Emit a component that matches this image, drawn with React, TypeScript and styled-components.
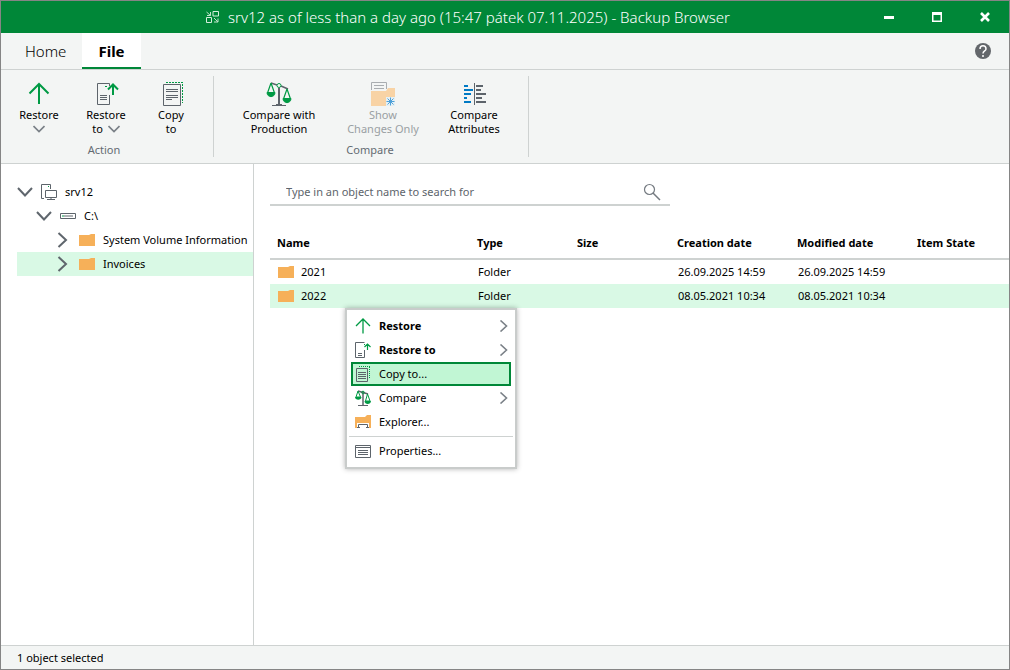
import React from "react";
import styled, { createGlobalStyle, css } from "styled-components";

const c = {
  green: "#008738",
  icon: "#009a44",
  grey: "#5d646b",
  line: "#ced2d1",
  panel: "#f3f5f4",
  select: "#d9f9e5",
  orange: "#f6b059",
};

const GlobalStyle = createGlobalStyle`
  *, *::before, *::after { box-sizing: border-box; }
  body {
    margin: 0;
    background: #fff;
    color: #000;
    font: 11px/14px "Noto Sans", "Open Sans", sans-serif;
  }
  button, input { font: inherit; color: inherit; }
  button { padding: 0; border: 0; background: none; }
  svg { display: block; flex: none; }
`;

const Window = styled.div`
  display: flex;
  flex-direction: column;
  min-height: 100vh;
  border: 1px solid #858585;
`;

const TitleBar = styled.header`
  display: grid;
  grid-template-columns: 1fr auto 1fr;
  align-items: center;
  height: 32px;
  background: ${c.green};
  color: #fff;
`;

const Title = styled.h1`
  grid-column: 2;
  display: flex;
  align-items: center;
  gap: 9px;
  margin: 0;
  padding-right: 74px;
  font: 300 15px/20px "Noto Sans", "Open Sans", sans-serif;
  white-space: nowrap;
`;

const WindowControls = styled.div`
  display: flex;
  justify-content: flex-end;
`;

const ControlButton = styled.button`
  display: grid;
  place-items: center;
  width: 48px;
  height: 32px;
`;

const TabBar = styled.nav`
  display: flex;
  align-items: stretch;
  height: 37px;
  background: ${c.panel};
  border-bottom: 1px solid ${c.line};
`;

const Tab = styled.button<{ $active?: boolean }>`
  padding: 0 16px;
  font-size: 15px;
  line-height: 20px;
  ${({ $active }) =>
    $active
      ? css`
          background: #fff;
          font-weight: 700;
          border-bottom: 2px solid ${c.green};
          padding-top: 2px;
        `
      : css`
          padding-left: 24px;
          font-weight: 300;
        `}
`;

const HelpButton = styled.button`
  margin-left: auto;
  padding: 0 18px;
`;

const Ribbon = styled.div`
  display: flex;
  height: 94px;
  padding: 6px 0;
  background: ${c.panel};
  border-bottom: 1px solid ${c.line};
`;

const RibbonGroup = styled.section<{ $pad: string }>`
  display: flex;
  flex-direction: column;
  justify-content: space-between;
  padding: ${({ $pad }) => $pad};
  border-right: 1px solid ${c.line};
`;

const RibbonButtons = styled.div`
  display: flex;
`;

const RibbonButton = styled.button<{ $width: number }>`
  display: flex;
  flex-direction: column;
  align-items: center;
  gap: 1px;
  width: ${({ $width }) => $width}px;
  padding-top: 5px;
  white-space: nowrap;
  &:disabled { color: #9aa0a3; }
`;

const ButtonText = styled.span`
  display: flex;
  flex-direction: column;
  align-items: center;
`;

const ButtonLine = styled.span`
  display: flex;
  align-items: center;
  gap: 5px;
  height: 14px;
`;

const GroupLabel = styled.h2`
  margin: 0;
  color: #646b72;
  font-size: 11px;
  font-weight: 400;
  line-height: 14px;
  text-align: center;
`;

const Body = styled.div`
  position: relative;
  display: flex;
  flex: 1;
  background: #fff;
`;

const Sidebar = styled.aside`
  flex: none;
  width: 253px;
  padding: 16px 0 0 16px;
  border-right: 1px solid ${c.line};
`;

const Tree = styled.ul`
  margin: 0;
  padding: 0;
  list-style: none;
`;

const TreeRow = styled.button<{ $level: number; $selected?: boolean }>`
  display: flex;
  align-items: center;
  gap: 8px;
  width: 100%;
  height: 24px;
  padding-left: ${({ $level }) => $level * 19}px;
  background: ${({ $selected }) => ($selected ? c.select : "transparent")};
  white-space: nowrap;
`;

const Main = styled.main`
  flex: 1;
  min-width: 0;
  padding: 14px 0 0 16px;
`;

const Search = styled.label`
  display: flex;
  align-items: center;
  width: 400px;
  max-width: 100%;
  height: 28px;
  padding: 2px 9px 0 16px;
  border-bottom: 2px solid ${c.line};
`;

const SearchInput = styled.input`
  flex: 1;
  min-width: 0;
  padding: 0;
  border: 0;
  outline: 0;
  background: transparent;
  &::placeholder { color: ${c.grey}; opacity: 1; }
`;

const FileTable = styled.table`
  width: 100%;
  margin-top: 20px;
  border-collapse: separate;
  border-spacing: 0;
  table-layout: fixed;
`;

const HeadCell = styled.th<{ $width?: number }>`
  width: ${({ $width }) => ($width ? `${$width}px` : "auto")};
  height: 34px;
  padding: 2px 0 0 7px;
  border-bottom: 2px solid ${c.line};
  font-weight: 700;
  text-align: left;
`;

const Row = styled.tr<{ $selected?: boolean }>`
  background: ${({ $selected }) => ($selected ? c.select : "transparent")};
`;

const Cell = styled.td`
  height: 24px;
  padding: 0 0 0 8px;
  white-space: nowrap;
`;

const NameCell = styled.div`
  display: flex;
  align-items: center;
  gap: 7px;
`;

const Menu = styled.div`
  position: absolute;
  top: 144px;
  left: 344px;
  width: 172px;
  padding: 4px;
  background: #fff;
  border: 2px solid #c9cccb;
  box-shadow: 0 0 5px rgba(0, 0, 0, 0.3);
`;

const MenuItem = styled.button<{ $active?: boolean; $bold?: boolean }>`
  display: flex;
  align-items: center;
  gap: 8px;
  width: 160px;
  height: 24px;
  padding: 0 0 0 2px;
  border: 2px solid ${({ $active }) => ($active ? c.green : "transparent")};
  background: ${({ $active }) => ($active ? "#c1f6d4" : "transparent")};
  font-weight: ${({ $bold }) => ($bold ? 700 : 400)};
`;

const MenuLabel = styled.span`
  flex: 1;
  text-align: left;
`;

const MenuDivider = styled.hr`
  margin: 2px -2px;
  border: 0;
  border-top: 1px solid ${c.line};
`;

const StatusBar = styled.footer`
  display: flex;
  align-items: center;
  height: 24px;
  padding-left: 16px;
  background: ${c.panel};
  border-top: 1px solid ${c.line};
`;

function Svg({ w, h = w, children }: { w: number; h?: number; children: React.ReactNode }) {
  return (
    <svg width={w} height={h} viewBox={`0 0 ${w} ${h}`} fill="none" aria-hidden="true">
      {children}
    </svg>
  );
}

const ChevronDown = () => (
  <Svg w={16} h={12}><path d="M1 2 8 9.500 15 2" stroke="#5f666d" strokeWidth="2" /></Svg>
);
const ChevronRight = () => (
  <Svg w={16}><path d="M3.500 1 11 8 3.500 15" stroke="#5f666d" strokeWidth="2" /></Svg>
);
const SmallDown = () => (
  <Svg w={12} h={8}><path d="M.5 1 6 6.500 11.500 1" stroke="#7a8087" strokeWidth="1.700" /></Svg>
);
const MenuArrow = () => (
  <Svg w={12}><path d="M3.500 .5 9.500 6 3.500 11.500" stroke="#7a8087" strokeWidth="1.600" /></Svg>
);
const Folder = () => (
  <Svg w={16} h={12}><path d="M0 1H10L12 0H16V12H0Z" fill={c.orange} /></Svg>
);

const AppIcon = () => (
  <Svg w={13} h={12}>
    <path d="M7 .5H12.500V5H7ZM.5 6.500H5.500V11.500H.5Z" stroke="#d5eedd" />
    <path d="M.5 1 4.500 4.500M4.500 1V4.500H1M8 7 12 11M12 7.500V11H8" stroke="#bfe5cb" />
  </Svg>
);

const RestoreIcon = () => (
  <Svg w={26}><path d="M13 3V23M3.500 12.500 13 3 22.500 12.500" stroke={c.icon} strokeWidth="2" /></Svg>
);

const RestoreToIcon = () => (
  <Svg w={26}>
    <path d="M16.500 14V23.500H4.500V2.500H16.500V5" stroke={c.grey} />
    <path d="M7 14.500H14M7 16.500H14M7 18.500H14" stroke={c.grey} />
    <path d="M12 5.500H14" stroke={c.icon} />
    <path d="M20 14V3.500M15 8.500 20 3.500 25 8.500" stroke={c.icon} strokeWidth="2" />
  </Svg>
);

const CopyIcon = () => (
  <Svg w={26}>
    <path d="M5.500 3.500H22.500V24.500H5.500Z" stroke={c.grey} />
    <path d="M8 8.500H20M8 10.500H20M8 14.500H20M8 16.500H20M8 18.500H14" stroke={c.grey} />
    <path d="M8 1.500H25M24.500 3V22" stroke={c.icon} strokeDasharray="2 1" />
  </Svg>
);

const ScalesIcon = () => (
  <Svg w={26}>
    <path d="M5 2 11 4M15 5 22 8" stroke={c.grey} strokeWidth="1.500" />
    <path d="M13 7V23" stroke={c.grey} strokeWidth="2" />
    <path d="M6 24.500H20M10 23.500H16" stroke={c.grey} />
    <circle cx="13" cy="4.500" r="2" stroke={c.icon} />
    <path d="M5 2 1.500 12M5 2 8.500 12M21 8 17.500 18M21 8 24.500 18" stroke={c.icon} strokeWidth="1.200" />
    <path d="M1 11.500H9C9 17 1 17 1 11.500ZM17 17.500H25C25 23 17 23 17 17.500Z" fill={c.icon} stroke={c.icon} />
  </Svg>
);

const ChangesIcon = () => (
  <Svg w={26}>
    <path d="M1 10H16L18 7H25V25H1Z" fill="#f8d3a5" />
    <path d="M1.500 9V1.500H16.500V8" stroke="#a9adb0" />
    <path d="M4 4.500H14M4 7.500H14" stroke="#a9adb0" />
    <path d="M16 16H25V25H16Z" fill="#e5f0f4" />
    <path d="M20.500 16.500V24.500M16.500 20.500H24.500M17.500 17.500 23.500 23.500M23.500 17.500 17.500 23.500" stroke="#4ea0d8" />
  </Svg>
);

const AttributesIcon = () => (
  <Svg w={26}>
    <path d="M3 5H7M3 9H12M3 13H10M3 17H6M3 21H10" stroke="#007ac4" strokeWidth="2" />
    <path d="M15 5H22M15 9H20M15 13H25M15 17H21M15 21H25" stroke={c.grey} strokeWidth="2" />
    <path d="M13.500 2V24" stroke={c.grey} />
  </Svg>
);

const ServerIcon = () => (
  <Svg w={16}>
    <path d="M3 14.500H.5V.5H9.500V5" stroke={c.grey} />
    <path d="M4.500 6.500H15.500V13.500H4.500Z" stroke={c.grey} />
    <path d="M10 14V15.500M6 15.500H14" stroke={c.grey} />
    <path d="M7 2.500H8" stroke={c.icon} />
  </Svg>
);

const DriveIcon = () => (
  <Svg w={16} h={6}>
    <path d="M.5.5H15.500V5.500H.5ZM4 3H13" stroke={c.grey} />
    <path d="M2 3H4" stroke={c.icon} />
  </Svg>
);

const SearchIcon = () => (
  <Svg w={18}>
    <circle cx="6.500" cy="6.500" r="5" stroke="#747a80" strokeWidth="1.200" />
    <path d="M10 10 17 17" stroke="#747a80" strokeWidth="1.500" />
  </Svg>
);

const HelpIcon = () => (
  <Svg w={16}>
    <circle cx="8" cy="8" r="8" fill="#63676b" />
    <path d="M5 6C5 1.800 11 1.800 11 6 11 8 8 8 8 10.500" stroke="#fff" strokeWidth="1.500" />
    <circle cx="8" cy="13" r="1" fill="#fff" />
  </Svg>
);

const MenuRestore = () => (
  <Svg w={16}><path d="M8 1V15.500M1 8 8 1 15 8" stroke={c.icon} strokeWidth="1.300" /></Svg>
);

const MenuRestoreTo = () => (
  <Svg w={16}>
    <path d="M9.500 8V15.500H.5V.5H9.500M3 11.500H7M3 13.500H7" stroke={c.grey} />
    <path d="M9 2.500H10M12.500 8V2M9.500 5 12.500 2 15.500 5" stroke={c.icon} strokeWidth="1.200" />
  </Svg>
);

const MenuCopy = () => (
  <Svg w={16}>
    <path d="M1.500 2.500H12.500V15.500H1.500ZM3 6.500H11M3 8.500H11M3 10.500H11M3 12.500H11" stroke={c.grey} />
    <path d="M4 .5H15M14.500 1V13" stroke={c.icon} strokeDasharray="1 1" />
  </Svg>
);

const MenuScales = () => (
  <Svg w={16}>
    <path d="M3 1 13 4M8 4V15" stroke={c.grey} strokeWidth="1.500" />
    <path d="M3 15.500H13" stroke={c.grey} />
    <circle cx="8" cy="2.500" r="1.300" stroke={c.icon} />
    <path d="M3 1 1 7H5.500ZM12.500 4 10.500 11H15Z" stroke={c.icon} />
    <path d="M0 7H6.500C6.500 10.500 0 10.500 0 7ZM9.500 11H16C16 15 9.500 15 9.500 11Z" fill={c.icon} />
  </Svg>
);

const ExplorerIcon = () => (
  <Svg w={16} h={14}>
    <path d="M0 2H10L12 0H16V13H0Z" fill={c.orange} />
    <path d="M2 14V8H14V14Z" fill="#fff" />
    <path d="M3.500 12.500V9.500H12.500V12.500M2 12.500H5M11 12.500H14" stroke={c.grey} />
  </Svg>
);

const PropertiesIcon = () => (
  <Svg w={16} h={13}>
    <path d="M.5.5H15.500V12.500H.5ZM1 2.500H15M3 5.500H13M3 7.500H13M3 9.500H13" stroke={c.grey} />
  </Svg>
);

type MenuEntry = {
  label: string;
  icon: React.ReactNode;
  bold?: boolean;
  sub?: boolean;
  active?: boolean;
};

const menuGroups: MenuEntry[][] = [
  [
    { label: "Restore", icon: <MenuRestore />, bold: true, sub: true },
    { label: "Restore to", icon: <MenuRestoreTo />, bold: true, sub: true },
    { label: "Copy to...", icon: <MenuCopy />, active: true },
    { label: "Compare", icon: <MenuScales />, sub: true },
    { label: "Explorer...", icon: <ExplorerIcon /> },
  ],
  [{ label: "Properties...", icon: <PropertiesIcon /> }],
];

const files = [
  { name: "2021", type: "Folder", created: "26.09.2025 14:59", modified: "26.09.2025 14:59" },
  { name: "2022", type: "Folder", created: "08.05.2021 10:34", modified: "08.05.2021 10:34", selected: true },
];

export default function App() {
  return (
    <Window>
      <GlobalStyle />
      <TitleBar>
        <Title>
          <AppIcon />
          srv12 as of less than a day ago (15:47 pátek 07.11.2025) - Backup Browser
        </Title>
        <WindowControls>
          <ControlButton aria-label="Minimize">
            <Svg w={10}><path d="M0 5.500H10" stroke="#fff" strokeWidth="3" /></Svg>
          </ControlButton>
          <ControlButton aria-label="Maximize">
            <Svg w={10}><path d="M0 0H10V10H0ZM1.500 3V8.500H8.500V3Z" fill="#fff" fillRule="evenodd" /></Svg>
          </ControlButton>
          <ControlButton aria-label="Close">
            <Svg w={10}><path d="M1 1 9 9M9 1 1 9" stroke="#fff" strokeWidth="2.600" /></Svg>
          </ControlButton>
        </WindowControls>
      </TitleBar>

      <TabBar>
        <Tab>Home</Tab>
        <Tab $active>File</Tab>
        <HelpButton aria-label="Help"><HelpIcon /></HelpButton>
      </TabBar>

      <Ribbon>
        <RibbonGroup $pad="0 11px 0 5px">
          <RibbonButtons>
            <RibbonButton $width={66}>
              <RestoreIcon />
              <ButtonText>
                <ButtonLine>Restore</ButtonLine>
                <ButtonLine><SmallDown /></ButtonLine>
              </ButtonText>
            </RibbonButton>
            <RibbonButton $width={68}>
              <RestoreToIcon />
              <ButtonText>
                <ButtonLine>Restore</ButtonLine>
                <ButtonLine>to <SmallDown /></ButtonLine>
              </ButtonText>
            </RibbonButton>
            <RibbonButton $width={62}>
              <CopyIcon />
              <ButtonText>
                <ButtonLine>Copy</ButtonLine>
                <ButtonLine>to</ButtonLine>
              </ButtonText>
            </RibbonButton>
          </RibbonButtons>
          <GroupLabel>Action</GroupLabel>
        </RibbonGroup>
        <RibbonGroup $pad="0 17px 0 15px">
          <RibbonButtons>
            <RibbonButton $width={100}>
              <ScalesIcon />
              <ButtonText>
                <ButtonLine>Compare with</ButtonLine>
                <ButtonLine>Production</ButtonLine>
              </ButtonText>
            </RibbonButton>
            <RibbonButton $width={108} disabled>
              <ChangesIcon />
              <ButtonText>
                <ButtonLine>Show</ButtonLine>
                <ButtonLine>Changes Only</ButtonLine>
              </ButtonText>
            </RibbonButton>
            <RibbonButton $width={74}>
              <AttributesIcon />
              <ButtonText>
                <ButtonLine>Compare</ButtonLine>
                <ButtonLine>Attributes</ButtonLine>
              </ButtonText>
            </RibbonButton>
          </RibbonButtons>
          <GroupLabel>Compare</GroupLabel>
        </RibbonGroup>
      </Ribbon>

      <Body>
        <Sidebar>
          <Tree>
            <li><TreeRow $level={0}><ChevronDown /><ServerIcon />srv12</TreeRow></li>
            <li><TreeRow $level={1}><ChevronDown /><DriveIcon />C:\</TreeRow></li>
            <li><TreeRow $level={2}><ChevronRight /><Folder />System Volume Information</TreeRow></li>
            <li><TreeRow $level={2} $selected><ChevronRight /><Folder />Invoices</TreeRow></li>
          </Tree>
        </Sidebar>

        <Main>
          <Search>
            <SearchInput aria-label="Search" placeholder="Type in an object name to search for" />
            <SearchIcon />
          </Search>
          <FileTable>
            <thead>
              <tr>
                <HeadCell $width={200}>Name</HeadCell>
                <HeadCell $width={100}>Type</HeadCell>
                <HeadCell $width={100}>Size</HeadCell>
                <HeadCell $width={120}>Creation date</HeadCell>
                <HeadCell $width={120}>Modified date</HeadCell>
                <HeadCell>Item State</HeadCell>
              </tr>
            </thead>
            <tbody>
              {files.map((f) => (
                <Row key={f.name} $selected={f.selected}>
                  <Cell><NameCell><Folder />{f.name}</NameCell></Cell>
                  <Cell>{f.type}</Cell>
                  <Cell />
                  <Cell>{f.created}</Cell>
                  <Cell>{f.modified}</Cell>
                  <Cell />
                </Row>
              ))}
            </tbody>
          </FileTable>
        </Main>

        <Menu role="menu">
          {menuGroups.map((group, i) => (
            <React.Fragment key={i}>
              {i > 0 && <MenuDivider />}
              {group.map((m) => (
                <MenuItem key={m.label} role="menuitem" $active={m.active} $bold={m.bold}>
                  {m.icon}
                  <MenuLabel>{m.label}</MenuLabel>
                  {m.sub && <MenuArrow />}
                </MenuItem>
              ))}
            </React.Fragment>
          ))}
        </Menu>
      </Body>

      <StatusBar>1 object selected</StatusBar>
    </Window>
  );
}
